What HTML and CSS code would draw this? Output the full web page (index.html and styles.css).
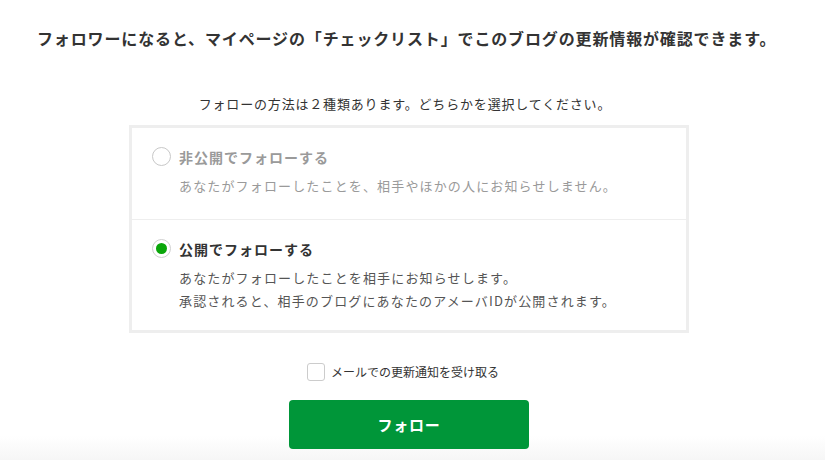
FILE: index.html
```html
<!DOCTYPE html>
<html lang="ja">
<head>
<meta charset="utf-8">
<title>フォロー</title>
<link rel="stylesheet" href="styles.css">
</head>
<body>
<main class="page">
  <h1 class="lead">フォロワーになると、マイページの「チェックリスト」でこのブログの更新情報が確認できます。</h1>
  <p class="sub">フォローの方法は２種類あります。どちらかを選択してください。</p>
  <div class="choices">
    <label class="choice is-off">
      <span class="radio"></span>
      <span class="choice-body">
        <span class="choice-title">非公開でフォローする</span>
        <span class="choice-desc">あなたがフォローしたことを、相手やほかの人にお知らせしません。</span>
      </span>
    </label>
    <label class="choice is-on">
      <span class="radio checked"></span>
      <span class="choice-body">
        <span class="choice-title">公開でフォローする</span>
        <span class="choice-desc">あなたがフォローしたことを相手にお知らせします。<br>承認されると、相手のブログにあなたのアメーバIDが公開されます。</span>
      </span>
    </label>
  </div>
  <label class="mail">
    <span class="check"></span>
    <span class="mail-text">メールでの更新通知を受け取る</span>
  </label>
  <button class="follow" type="button">フォロー</button>
</main>
</body>
</html>
```
FILE: styles.css
```css
html {
  background: linear-gradient(to bottom, #ffffff 0, #ffffff 436px, #f6f6f6 460px) no-repeat;
  min-height: 100%;
}
body {
  margin: 0;
  font-family: "Noto Sans CJK JP", "Noto Sans", sans-serif;
  color: #333;
}
.page {
  width: 818px;
  display: flex;
  flex-direction: column;
  align-items: center;
}
.lead {
  align-self: flex-start;
  margin: 27px 0 0 37px;
  font-size: 16px;
  line-height: 22px;
  font-weight: 700;
  letter-spacing: 0.86px;
  color: #333;
  white-space: nowrap;
}
.sub {
  margin: 45px 8px 0 0;
  font-size: 13px;
  line-height: 20px;
  letter-spacing: 0.82px;
  color: #333;
}
.choices {
  margin-top: 11px;
  width: 554px;
  border: 3px solid #eeeeee;
  display: flex;
  flex-direction: column;
}
.choice {
  display: flex;
  gap: 8px;
  padding: 18px 20px 22px 20px;
}
.choice + .choice {
  border-top: 1px solid #eeeeee;
  padding-bottom: 18px;
}
.radio {
  flex: none;
  width: 17px;
  height: 17px;
  border: 1px solid #cfcfcf;
  border-radius: 50%;
  margin-top: 1px;
  display: flex;
  align-items: center;
  justify-content: center;
  background: #fff;
}
.radio.checked::after {
  content: "";
  width: 11px;
  height: 11px;
  border-radius: 50%;
  background: #0aa60a;
}
.choice-body {
  display: flex;
  flex-direction: column;
}
.choice-title {
  font-size: 14px;
  line-height: 22px;
  font-weight: 700;
  letter-spacing: 1px;
}
.choice-desc {
  margin-top: 6px;
  font-size: 13px;
  line-height: 23px;
  letter-spacing: 1.15px;
}
.is-off .choice-title,
.is-off .choice-desc {
  color: #9a9a9a;
}
.is-off .radio {
  border-color: #c8c8c8;
}
.is-on .choice-title {
  color: #333;
}
.is-on .choice-desc {
  color: #555;
}
.mail {
  margin: 30px 12px 0 0;
  display: flex;
  align-items: center;
  gap: 6px;
}
.check {
  width: 16px;
  height: 16px;
  border: 1px solid #cccccc;
  border-radius: 3px;
  background: #fff;
}
.mail-text {
  font-size: 12px;
  line-height: 18px;
  color: #333;
}
.follow {
  margin-top: 19px;
  width: 240px;
  height: 49px;
  border: 0;
  border-radius: 4px;
  background: #009639;
  color: #fff;
  font-family: "Noto Sans CJK JP", "Noto Sans", sans-serif;
  font-size: 15px;
  font-weight: 700;
  letter-spacing: 0.05em;
}
```
